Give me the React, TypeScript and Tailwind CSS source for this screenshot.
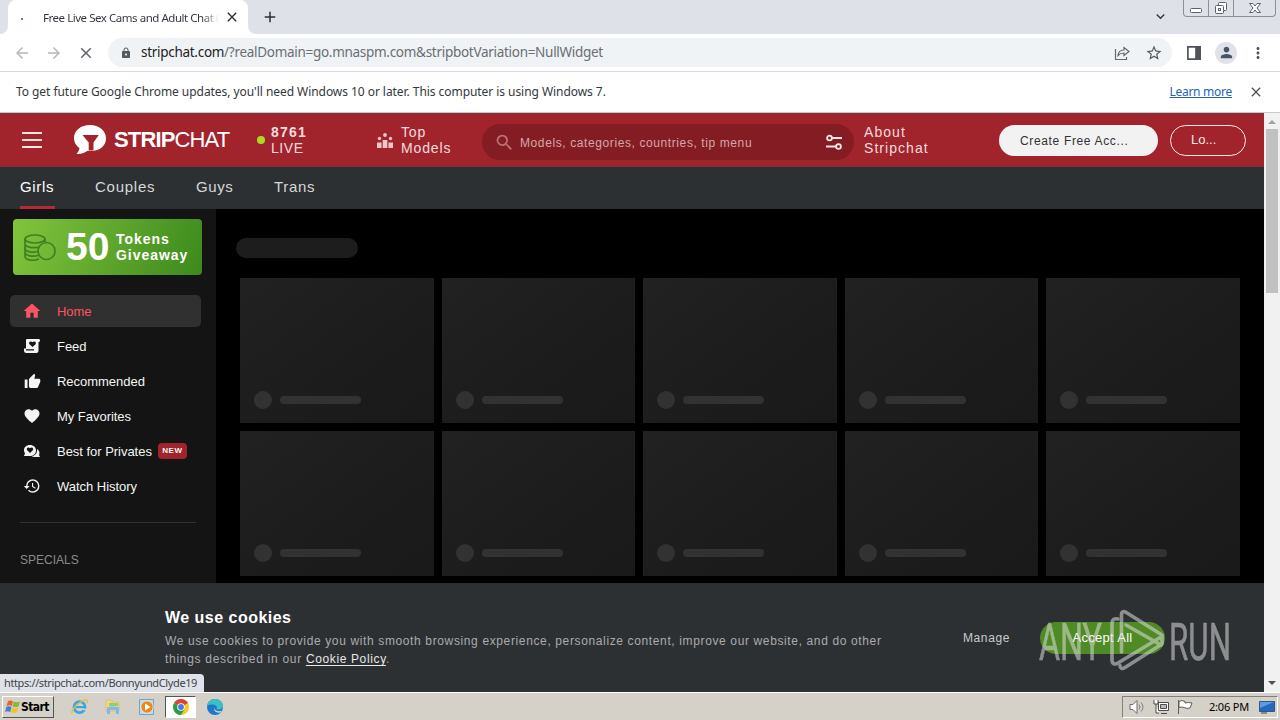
import type { ReactNode } from 'react';
import { clsx } from 'clsx';
import {
  MdArrowBack,
  MdArrowForward,
  MdClose,
  MdExpandMore,
  MdFavorite,
  MdHistory,
  MdHome,
  MdLock,
  MdMoreVert,
  MdPerson,
  MdSearch,
  MdStarOutline,
  MdThumbUp,
  MdAdd,
} from 'react-icons/md';

const chromeFont = "font-['Noto_Sans','Open_Sans',sans-serif]";
const siteFont = "font-['Liberation_Sans',Arial,sans-serif]";

function TabStrip() {
  return (
    <div className="flex h-[34px] items-start bg-[#dee1e8]">
      <div className="h-full w-2 bg-white">
        <div className="h-full rounded-br-lg bg-[#dee1e8]" />
      </div>
      <div className="flex h-full w-[240px] items-center rounded-t-lg bg-white pl-[13px]">
        <span className="mt-1 h-[2px] w-[2px] bg-[#4a7bd0]" />
        <span className="mt-px ml-5 w-[176px] bg-gradient-to-r from-[#30343a] from-90% to-white bg-clip-text text-[11.5px] tracking-[-0.460px] whitespace-nowrap text-transparent">
          Free Live Sex Cams and Adult Chat (
        </span>
        <MdClose className="ml-[5px] h-4 w-4 text-[#2c3036]" />
      </div>
      <div className="h-full w-2 bg-white">
        <div className="h-full rounded-bl-lg bg-[#dee1e8]" />
      </div>
      <MdAdd className="mt-2 ml-[5px] h-[18px] w-[18px] text-[#2c3036]" />
      <MdExpandMore className="mt-2 ml-auto h-[17px] w-[17px] text-[#33373d]" />
      <div className="mr-1 ml-[14px] flex h-[17px] w-[93px] rounded-b border border-t-0 border-[#8b9099] text-[#5c616b]">
        <span className="grid w-[25px] place-items-center border-r border-[#8b9099]">
          <svg viewBox="0 0 14 14" className="h-[14px] w-[14px]" fill="white" stroke="currentColor">
            <rect x="1.5" y="7.5" width="11" height="4" rx="1" />
          </svg>
        </span>
        <span className="grid w-[25px] place-items-center border-r border-[#8b9099]">
          <svg viewBox="0 0 14 14" className="h-[14px] w-[14px]" fill="white" stroke="currentColor">
            <rect x="4.5" y="1.5" width="8" height="8" rx="1" />
            <rect x="1.5" y="4.5" width="8" height="8" rx="1" />
            <rect x="4.5" y="7.5" width="2" height="2" />
          </svg>
        </span>
        <span className="grid flex-1 place-items-center">
          <svg viewBox="0 0 14 14" className="h-[14px] w-[14px]" fill="white" stroke="currentColor">
            <path d="M1.5 2.5h3.5l2 2.5 2-2.5h3.5L9 7l3.500 4.500H9L7 9l-2 2.500H1.500L5 7z" />
          </svg>
        </span>
      </div>
    </div>
  );
}

function Toolbar() {
  return (
    <div className="flex h-[38px] items-center border-b border-[#d6d8db] bg-white pl-[13px]">
      <MdArrowBack className="h-[18px] w-[18px] text-[#b5b7ba]" />
      <MdArrowForward className="ml-[14px] h-[18px] w-[18px] text-[#b5b7ba]" />
      <MdClose className="ml-[14px] h-[18px] w-[18px] text-[#5f6368]" />
      <div className="ml-[13px] flex h-[29px] w-[1064px] items-center rounded-full bg-[#f0f3f6] pr-[9px] pl-3">
        <MdLock className="h-[14px] w-3 text-[#55595e]" />
        <span className="ml-[9px] text-[13.5px] tracking-[-0.290px] whitespace-nowrap text-[#6a6e73]">
          <span className="text-[#202124]">stripchat.com</span>
          /?realDomain=go.mnaspm.com&amp;stripbotVariation=NullWidget
        </span>
        <svg viewBox="0 0 16 16" className="ml-auto h-4 w-4" fill="none" stroke="#64686d" strokeWidth="1.2">
          <path d="M1.500 4v10.500h11V12" />
          <path d="M4 10.500c.3-3.600 2.500-5.500 6-5.500V2.500l5 4-5 4V8c-2.600 0-4.500.7-6 2.500z" />
        </svg>
        <MdStarOutline className="ml-[15px] h-[18px] w-[18px] text-[#55595e]" />
      </div>
      <svg viewBox="0 0 14 14" className="ml-[15px] h-[14px] w-[14px]" fill="none" stroke="#50545a" strokeWidth="1.700">
        <path d="M.9.9h12.200v12.200H.9z" />
        <path d="M9 1h4v12H9z" fill="#50545a" />
      </svg>
      <span className="ml-[14px] grid h-[22px] w-[22px] place-items-center rounded-full bg-[#dfe3e8]">
        <MdPerson className="h-[17px] w-[17px] text-[#4a5468]" />
      </span>
      <MdMoreVert className="ml-3 h-[18px] w-[18px] text-[#50545a]" />
    </div>
  );
}

function InfoBar() {
  return (
    <div className="flex h-[41px] items-center border-b border-[#d0c8c8] bg-white pl-4 text-[12px]">
      <span className="w-[620px] tracking-[-0.055px] whitespace-nowrap text-[#34373b]">
        To get future Google Chrome updates, you'll need Windows 10 or later. This computer is using Windows 7.
      </span>
      <span className="ml-auto text-[12px] tracking-[-0.270px] text-[#2264b4] underline underline-offset-1">
        Learn more
      </span>
      <MdClose className="mr-[16px] ml-[16px] h-4 w-4 text-[#50545a]" />
    </div>
  );
}

function SiteHeader() {
  return (
    <header className="flex h-[54px] shrink-0 items-center border-y-2 border-[#8a2c35] bg-[#a1242d] pl-[22px] text-[14px] leading-4 text-[#f4dcde]">
      <span className="flex w-5 flex-col gap-[5px]">
        <i className="h-[2px] bg-[#f6e4e5]" />
        <i className="h-[2px] bg-[#f6e4e5]" />
        <i className="h-[2px] bg-[#f6e4e5]" />
      </span>
      <svg viewBox="0 0 34 32" className="ml-8 h-8 w-[34px]">
        <path
          d="M16 1C7 1 0 6.400 0 14c0 4.600 2.500 7.800 5.500 10-.3 2.500-1.700 4.500-3 6 5 .3 8.500-1.300 11-3.200 11 1.500 18.500-4.300 18.500-12.300C32 6.500 25 1 16 1z"
          fill="white"
        />
        <path d="M8.500 11h16.300L19.500 18.500v8h-4.800v-8z" fill="#a1242d" />
      </svg>
      <span className="ml-[6px] w-[116px] text-[22px] tracking-[-0.850px] text-white">
        <b>STRIP</b>CHAT
      </span>
      <span className="ml-[27px] h-2 w-2 rounded-full bg-[#a9dc1c]" />
      <span className="ml-[6px] w-[106px] tracking-[0.550px]">
        <b className="tracking-[1.200px]">8761</b>
        <br />
        LIVE
      </span>
      <svg viewBox="0 0 16 16" className="h-4 w-4" fill="#f1c6ca">
        <path d="M0 10.500h4.500V16H0zM5.700 8h4.600v8H5.700zM11.500 10.500H16V16h-4.500z" />
        <circle cx="2.500" cy="6.500" r="1.700" />
        <circle cx="8" cy="3" r="1.900" />
        <circle cx="13.500" cy="6.500" r="1.700" />
      </svg>
      <span className="ml-2 w-[81px] tracking-[0.850px]">
        Top
        <br />
        Models
      </span>
      <div className="mt-1 flex h-9 w-[372px] items-center rounded-full bg-[#831d23] pr-3 pl-3 text-[#d9a5a9]">
        <MdSearch className="h-[21px] w-[21px] text-[#bd7076]" />
        <span className="mt-0.5 ml-[5px] text-[12px] tracking-[0.600px]">Models, categories, countries, tip menu</span>
        <svg viewBox="0 0 16 16" className="ml-auto h-4 w-4" fill="none" stroke="#fae8e9" strokeWidth="1.800">
          <circle cx="3.500" cy="4" r="2.400" />
          <path d="M6 4h10M0 12.500h10" />
          <circle cx="12.500" cy="12.500" r="2.400" />
        </svg>
      </div>
      <span className="ml-[10px] w-[135px] tracking-[1.050px]">
        About
        <br />
        Stripchat
      </span>
      <button className="h-[31px] w-[159px] rounded-full bg-[#f2f2f2] pt-px pl-[21px] text-left text-[12px] tracking-[0.650px] text-[#333]">
        Create Free Acc...
      </button>
      <button className="ml-3 h-[31px] w-[76px] rounded-full border border-[#fae8e9] pl-[20px] text-left text-[13px] text-[#fae8e9]">
        Lo...
      </button>
    </header>
  );
}

function CategoryNav() {
  return (
    <nav className="flex h-[42px] shrink-0 bg-[#2d3033] pl-5 text-[15px] leading-[39px] text-[#d6d7d8]">
      <span className="mr-[40px] w-[35px] border-b-[3px] border-[#b52a38] tracking-[0.650px] text-white">Girls</span>
      <span className="w-[101px] tracking-[0.750px]">Couples</span>
      <span className="w-[78px] tracking-[0.600px]">Guys</span>
      <span className="tracking-[0.700px]">Trans</span>
    </nav>
  );
}

function FeedIcon() {
  return (
    <svg viewBox="0 0 16 16" className="h-4 w-4" fill="currentColor">
      <path
        fillRule="evenodd"
        d="M3 1h11.500c1 0 1.500.6 1.500 1.500S15.500 4 14.500 4v8.500A2.500 2.500 0 0 1 12 15H2.500A2.500 2.500 0 0 1 0 12.500V10.500h2V2.500C2 1.500 2.300 1 3 1zM8.500 9l3-2.800C13 4 10 2.500 8.500 4.200 7 2.500 4 4 5.500 6.200zM2 11.200V12.500h8v-1.300z"
      />
    </svg>
  );
}

function PrivatesIcon() {
  return (
    <svg viewBox="0 0 16 16" className="h-4 w-4" fill="currentColor">
      <path
        fillRule="evenodd"
        d="M6 2C2.500 2 0 4.200 0 7c0 1.400.6 2.600 1 3.300L0 13h4c5 .5 8-2 8-5.500C12 4.300 9.500 2 6 2zm0 8L3.200 7.200C1.800 5 4.500 3.500 6 5.200 7.500 3.500 10.200 5 8.800 7.200z"
      />
      <path d="M13 6c2 1 3.200 3.800 2 6l1 2h-5c-1.500 0-2.500-.3-3.500-.8C11 13 13.500 10 13 6z" />
    </svg>
  );
}

const menu: { label: string; icon: ReactNode; active?: boolean; badge?: string }[] = [
  { label: 'Home', icon: <MdHome className="h-5 w-5" />, active: true },
  { label: 'Feed', icon: <FeedIcon /> },
  { label: 'Recommended', icon: <MdThumbUp className="h-[17px] w-[17px]" /> },
  { label: 'My Favorites', icon: <MdFavorite className="h-[18px] w-[18px]" /> },
  { label: 'Best for Privates', icon: <PrivatesIcon />, badge: 'NEW' },
  { label: 'Watch History', icon: <MdHistory className="h-[18px] w-[18px]" /> },
];

function Sidebar() {
  return (
    <aside className="w-[216px] shrink-0 bg-[#141414] pt-[10px]">
      <div className="ml-[13px] flex h-14 w-[189px] items-center rounded bg-linear-[110deg] from-[#82c43c] to-[#3c8a1d] pl-[11px] text-white">
        <svg viewBox="0 0 32 27" className="h-[27px] w-8" fill="none" stroke="#3f8020" strokeWidth="1.700">
          <ellipse cx="11" cy="5" rx="10" ry="4" />
          <path d="M1 5v17c0 5 9 5 14 3M21 5v3M1 9.500c0 4 9 5 14 3.500M1 14c0 4 8 5 12 3.500M1 18c0 4 8 5 13 3.500" />
          <circle cx="22.500" cy="17" r="8.500" />
        </svg>
        <b className="mb-0.5 ml-[10px] w-[50px] text-[39px] leading-none">50</b>
        <b className="text-[14px] leading-4 tracking-[0.950px]">
          Tokens
          <br />
          Giveaway
        </b>
      </div>
      <ul className="mt-5 ml-[10px] flex flex-col gap-[3px]">
        {menu.map((item) => (
          <li
            key={item.label}
            className={clsx(
              'flex h-8 w-[191px] items-center rounded-[5px] pl-3 text-[13px]',
              item.active ? 'bg-[#303030] text-[#fb5464]' : 'text-[#f4f4f4]',
            )}
          >
            <span className="grid w-5 place-items-center">{item.icon}</span>
            <span className="mt-0.5 ml-[15px] tracking-[-0.030px] whitespace-nowrap">{item.label}</span>
            {item.badge && (
              <b className="ml-[6px] h-4 w-[29px] rounded bg-[#a1242d] text-center text-[8px] leading-4 tracking-[0.600px]">
                {item.badge}
              </b>
            )}
          </li>
        ))}
      </ul>
      <div className="mt-5 ml-5 w-[176px] border-t border-[#303030] pt-[30px] text-[12px] leading-[14px] text-[#8a8a8a]">
        SPECIALS
      </div>
    </aside>
  );
}

function ModelGrid() {
  return (
    <main className="min-w-0 flex-1 overflow-hidden bg-black pt-[29px]">
      <div className="ml-5 h-5 w-[122px] rounded-full bg-[#1d1d1d]" />
      <div className="mt-5 mr-6 ml-6 grid grid-cols-5 gap-2">
        {Array.from({ length: 10 }, (_, i) => (
          <div key={i} className="flex h-[145px] items-end bg-linear-to-br from-[#212121] to-[#191919] pb-[14px] pl-[14px]">
            <span className="h-[18px] w-[18px] rounded-full bg-[#323232]" />
            <span className="mb-[5px] ml-2 h-2 w-[81px] rounded-full bg-[#323232]" />
          </div>
        ))}
      </div>
    </main>
  );
}

function Watermark() {
  return (
    <svg viewBox="0 0 194 64" className="absolute top-[25px] left-[1038px] h-16 w-[194px] opacity-55">
      <g fill="#dcdcdc" stroke="#dcdcdc" strokeWidth=".6" fontFamily="Roboto" fontSize="52">
        <text x="1" y="51.500" textLength="63" lengthAdjust="spacingAndGlyphs">
          ANY
        </text>
        <text x="131" y="51.500" textLength="62" lengthAdjust="spacingAndGlyphs">
          RUN
        </text>
      </g>
      <g fill="none" stroke="#dcdcdc" strokeWidth="3.600" strokeLinejoin="round" strokeLinecap="round">
        <path d="M83.500 44V6c0-2 2-3 4-2L124 27v9L87 59.500c-3 2-5 1-5-2" />
        <path d="M80 11c-4-1-6 1-6 4v37c0 4 3 5 6 3l43-26M88 17l35 20" />
      </g>
    </svg>
  );
}

function CookieBanner() {
  return (
    <section className="relative flex h-[109px] shrink-0 bg-[#2d3033] pl-[165px]">
      <div className="w-[798px] pt-[25px]">
        <h2 className="text-[16px] leading-[19px] font-bold tracking-[0.480px] text-white">We use cookies</h2>
        <p className="mt-[5px] w-[740px] text-[12px] leading-[18px] tracking-[0.630px] text-[#a9abad]">
          We use cookies to provide you with smooth browsing experience, personalize content, improve our website, and do
          other
          <br />
          <span className="tracking-[0.700px]">things described in our </span>
          <span className="text-[#e8e8e8] underline underline-offset-2">Cookie Policy</span>.
        </p>
      </div>
      <span className="mt-[39px] w-[77px] text-[12px] leading-8 tracking-[0.600px] text-[#c9cacb]">
        Manage
      </span>
      <button className="mt-[39px] h-8 w-[125px] rounded-full bg-[#4f8a24] text-[13px] tracking-[0.300px] text-white">
        Accept All
      </button>
      <Watermark />
      <div
        className={clsx(
          chromeFont,
          'absolute bottom-0 left-0 h-[18px] w-[204px] rounded-tr bg-[#dfe2e8] pl-1 text-[11px] leading-[18px] tracking-[-0.380px] whitespace-nowrap text-[#40444b]',
        )}
      >
        https://stripchat.com/BonnyundClyde19
      </div>
    </section>
  );
}

function ScrollBar() {
  return (
    <div className="flex w-4 flex-col items-center bg-[#f1f1f1]">
      <svg viewBox="0 0 16 16" className="h-4 w-4">
        <path d="M4 11l4-4 4 4z" fill="#a3a3a3" />
      </svg>
      <div className="h-[164px] w-3 bg-[#c1c1c1]" />
      <svg viewBox="0 0 16 16" className="mt-auto h-4 w-4">
        <path d="M4 5l4 4 4-4z" fill="#505050" />
      </svg>
    </div>
  );
}

function ExplorerIcon() {
  return (
    <svg viewBox="0 0 16 16" className="h-[17px] w-[17px]">
      <circle cx="8" cy="8.500" r="5.200" fill="none" stroke="#3aa5df" strokeWidth="2.600" />
      <path d="M4 8.500h9" stroke="#3aa5df" strokeWidth="2" />
      <path d="M11 10.700h4" stroke="#d5d0c8" strokeWidth="1.600" />
      <path d="M1 14.500C-.5 11 11 .5 15 2c.8.500.5 2-.3 3" fill="none" stroke="#e6bd42" strokeWidth="1.200" />
    </svg>
  );
}

function FolderIcon() {
  return (
    <svg viewBox="0 0 16 16" className="h-4 w-4">
      <path d="M1 1h5l1 2h7v9H1z" fill="#f3d97c" stroke="#d5b757" strokeWidth=".6" />
      <path d="M4 4h9v3H4z" fill="#8ccf7e" />
      <path d="M2 9c0-2 12-2 12 0v6h-3v-4H5v4H2z" fill="#7dbbe3" />
    </svg>
  );
}

function MediaIcon() {
  return (
    <svg viewBox="0 0 16 16" className="h-4 w-4">
      <path d="M.5.5h14v15H.5z" fill="#b9dcf2" stroke="#6ca5cc" />
      <circle cx="8" cy="8" r="6.200" fill="#ef851f" stroke="#fff" strokeWidth=".7" />
      <path d="M6 4.500v7L11.500 8z" fill="white" />
    </svg>
  );
}

function ChromeIcon() {
  return (
    <svg viewBox="0 0 16 16" className="h-4 w-4">
      <circle cx="8" cy="8" r="8" fill="#f8c923" />
      <path d="M8 8L1.100 4A8 8 0 0 1 14.900 4z" fill="#dd4435" />
      <path d="M8 8L1.100 4A8 8 0 0 0 8 16l3.500-6z" fill="#2b9b4f" />
      <circle cx="8" cy="8" r="3.800" fill="white" />
      <circle cx="8" cy="8" r="2.900" fill="#3f7fe8" />
    </svg>
  );
}

function EdgeIcon() {
  return (
    <svg viewBox="0 0 16 16" className="h-4 w-4">
      <circle cx="8" cy="8" r="8" fill="#1b78cc" />
      <path d="M.2 7C1-2.500 15.500-2 16 7c0 3-4 4.500-6.500 3 2-4-5-6-9.300-3z" fill="#39bfc4" />
      <path d="M7.500 8.500c-.5 2.500 2.500 4.500 7 3.300l-1 1.700c-4 1-7.500-1.500-6-5z" fill="#d5d0c8" />
    </svg>
  );
}

function TaskBar() {
  return (
    <footer className="flex h-7 items-center border-t border-white bg-[#d5d0c8] pl-0.5">
      <button className="flex h-[22px] w-[52px] items-center border border-t-white border-r-[#555] border-b-[#555] border-l-white pl-0.5">
        <svg viewBox="0 0 16 16" className="h-4 w-4 shrink-0">
          <path d="M3 2c2-1 3-.7 5 .2L6.800 7C5 6 4 6 1.600 7z" fill="#e9632a" />
          <path d="M8.700 2.500c2 1 4 .9 6.300 0L13.500 7.500c-2 .9-4 .7-6 0z" fill="#83ba38" />
          <path d="M1.300 8c2-1 3.500-.8 5.200 0L5.200 13c-2-1-3-1-5 0z" fill="#3a82d6" />
          <path d="M7.200 8.500c2 1 4 .8 6.100 0L12 13.300c-2 .9-4 .7-6.100 0z" fill="#f5c02f" />
        </svg>
        <b className="font-['DejaVu_Sans_Condensed','DejaVu_Sans',sans-serif] text-[12px] leading-4 tracking-[-0.600px] text-black">
          Start
        </b>
      </button>
      <span className="ml-[17px]">
        <ExplorerIcon />
      </span>
      <span className="ml-[17px]">
        <FolderIcon />
      </span>
      <span className="ml-[18px]">
        <MediaIcon />
      </span>
      <span className="ml-[10px] grid h-[22px] w-[31px] place-items-center border border-t-[#555] border-r-white border-b-white border-l-[#555] bg-white">
        <ChromeIcon />
      </span>
      <span className="ml-[11px]">
        <EdgeIcon />
      </span>
      <div className="mr-0.5 ml-auto flex h-[22px] w-[156px] items-center border border-t-[#808080] border-r-white border-b-white border-l-[#808080] pl-1.5">
        <svg viewBox="0 0 17 16" className="h-4 w-[17px]" fill="white" stroke="#6b6b6b">
          <path d="M1 5.500h3l4-4v13l-4-4H1z" />
          <path d="M10 5.500q2 2.500 0 5M12 3.500q4 4.500 0 9" fill="none" strokeWidth=".8" />
        </svg>
        <svg viewBox="0 0 16 16" className="ml-[7px] h-4 w-4" fill="white" stroke="#4c4c4c">
          <path d="M5.500 3.500h10v8h-10z" />
          <path d="M7.500 5.500h6v4h-6z" fill="#bbb" />
          <path d="M8 14.500h6M1 1v4h4V1M3 5v9h3" />
        </svg>
        <svg viewBox="0 0 16 16" className="ml-2 h-4 w-4" fill="white" stroke="#5c5c5c">
          <path d="M1.500 1v14M2 2.500q3-2 6 0v1.500q3-1 7 0l-2 5q-3 1-6-.5-3-1-5 0z" />
        </svg>
        <span
          className={clsx(
            chromeFont,
            'mt-px ml-4 text-[11px] tracking-[-0.200px] whitespace-nowrap text-black',
          )}
        >
          2:06 PM
        </span>
        <svg viewBox="0 0 16 14" className="mr-0.5 ml-auto h-[14px] w-4">
          <path d="M.5 1.500h15v10H.5z" fill="#2469bd" stroke="#34597f" />
          <path d="M1 2h14L1 8z" fill="#5d9ce0" />
          <path d="M2 13h6" stroke="#444" />
        </svg>
      </div>
    </footer>
  );
}

export default function App() {
  return (
    <div className={clsx('flex h-[720px] w-[1280px] flex-col overflow-hidden bg-white', chromeFont)}>
      <TabStrip />
      <Toolbar />
      <InfoBar />
      <div className="flex h-[579px]">
        <div className={clsx('flex w-[1264px] flex-col', siteFont)}>
          <SiteHeader />
          <CategoryNav />
          <div className="flex h-[374px]">
            <Sidebar />
            <ModelGrid />
          </div>
          <CookieBanner />
        </div>
        <ScrollBar />
      </div>
      <TaskBar />
    </div>
  );
}
